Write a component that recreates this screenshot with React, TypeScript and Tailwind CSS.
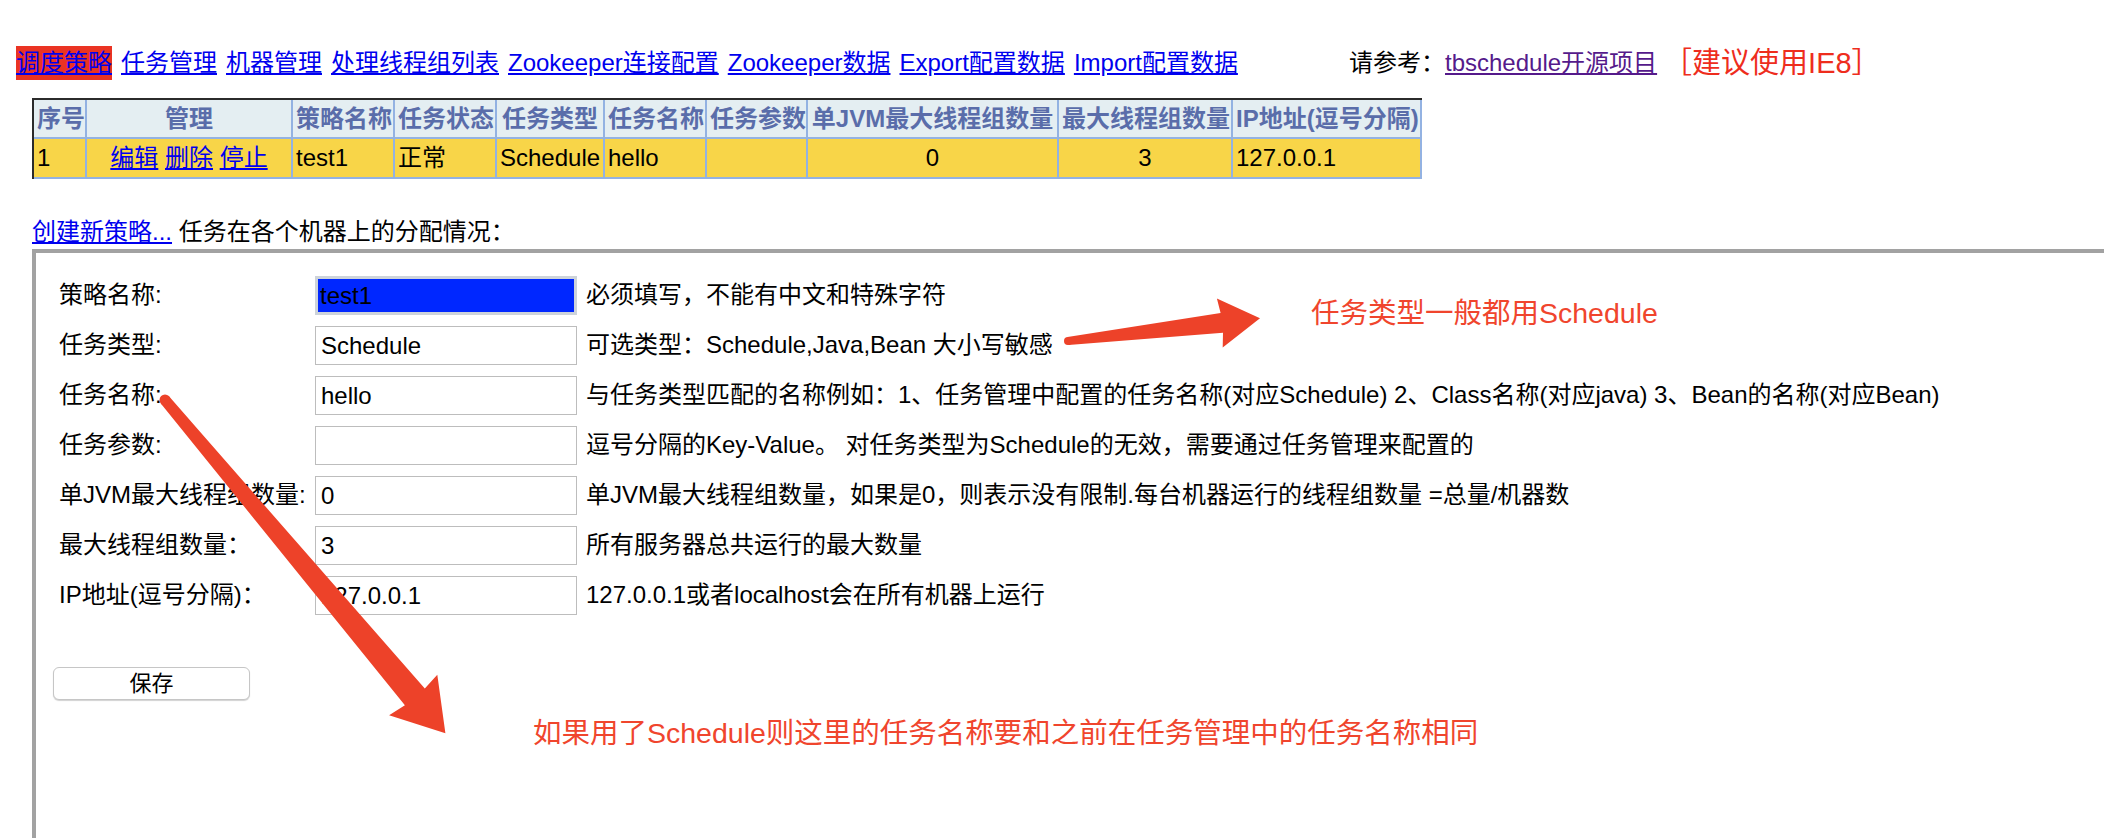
import React from 'react';

type Pt = [number, number];

// Preview-style arrow: thin rounded tail, shaft widens toward a triangular head
function arrowPoints(tail: Pt, tip: Pt, tailW: number, shaftW: number, headL: number, headH: number) {
  const dx = tip[0] - tail[0];
  const dy = tip[1] - tail[1];
  const len = Math.hypot(dx, dy);
  const ux = dx / len;
  const uy = dy / len;
  const nx = -uy;
  const ny = ux;
  const join: Pt = [tip[0] - ux * headL * 0.95, tip[1] - uy * headL * 0.95];
  const base: Pt = [tip[0] - ux * headL, tip[1] - uy * headL];
  const p = (x: number, y: number) => `${x.toFixed(1)},${y.toFixed(1)}`;
  return [
    p(tail[0] + nx * tailW / 2, tail[1] + ny * tailW / 2),
    p(join[0] + nx * shaftW / 2, join[1] + ny * shaftW / 2),
    p(base[0] + nx * headH, base[1] + ny * headH),
    p(tip[0], tip[1]),
    p(base[0] - nx * headH, base[1] - ny * headH),
    p(join[0] - nx * shaftW / 2, join[1] - ny * shaftW / 2),
    p(tail[0] - nx * tailW / 2, tail[1] - ny * tailW / 2),
  ].join(' ');
}

const NAV_LINKS = ['任务管理', '机器管理', '处理线程组列表', 'Zookeeper连接配置', 'Zookeeper数据', 'Export配置数据', 'Import配置数据'];

const HEADERS = [
  { label: '序号', w: 'w-[53px]' },
  { label: '管理', w: 'w-[206px]' },
  { label: '策略名称', w: 'w-[102px]' },
  { label: '任务状态', w: 'w-[102px]' },
  { label: '任务类型', w: 'w-[108px]' },
  { label: '任务名称', w: 'w-[102px]' },
  { label: '任务参数', w: 'w-[101px]' },
  { label: '单JVM最大线程组数量', w: 'w-[251px]' },
  { label: '最大线程组数量', w: 'w-[174px]' },
  { label: 'IP地址(逗号分隔)', w: 'w-[189px]' },
];

const FORM_ROWS = [
  { label: '策略名称:', value: 'test1', desc: '必须填写，不能有中文和特殊字符', focused: true },
  { label: '任务类型:', value: 'Schedule', desc: '可选类型：Schedule,Java,Bean 大小写敏感' },
  { label: '任务名称:', value: 'hello', desc: '与任务类型匹配的名称例如：1、任务管理中配置的任务名称(对应Schedule) 2、Class名称(对应java) 3、Bean的名称(对应Bean)' },
  { label: '任务参数:', value: '', desc: '逗号分隔的Key-Value。 对任务类型为Schedule的无效，需要通过任务管理来配置的' },
  { label: '单JVM最大线程组数量:', value: '0', desc: '单JVM最大线程组数量，如果是0，则表示没有限制.每台机器运行的线程组数量 =总量/机器数' },
  { label: '最大线程组数量：', value: '3', desc: '所有服务器总共运行的最大数量' },
  { label: 'IP地址(逗号分隔)：', value: '127.0.0.1', desc: '127.0.0.1或者localhost会在所有机器上运行' },
];

const cellBorder = 'border-r-2 border-b-2 border-[#93b2e2]';

function Nav() {
  return (
    <div className="flex items-center pt-[46px] pl-[16px] h-[80px] leading-[34px]">
      <div className="flex items-center gap-[9px] w-[1333px]">
        <a className="inline-block h-[34px] bg-[#ea3323] text-[#0000ee] underline">调度策略</a>
        {NAV_LINKS.map((l) => (
          <a key={l} className="text-[#0000ee] underline whitespace-nowrap">{l}</a>
        ))}
      </div>
      <div className="flex items-center whitespace-nowrap">
        <span>请参考：</span>
        <a className="text-[#551a8b] underline">tbschedule开源项目</a>
        <span className="ml-[6px] text-[29px] text-[#ee2d1d]">［建议使用IE8］</span>
      </div>
    </div>
  );
}

function StrategyTable() {
  return (
    <table className="mt-[18px] ml-[32px] w-[1390px] table-fixed border-separate border-spacing-0 border-t-2 border-l-2 border-[#2b2b2b]">
      <thead>
        <tr>
          {HEADERS.map((h) => (
            <th key={h.label} className={`${h.w} h-[39px] p-0 px-[3px] ${cellBorder} bg-[#e4eef2] text-[#5a6daa] font-bold text-center whitespace-nowrap`}>
              {h.label}
            </th>
          ))}
        </tr>
      </thead>
      <tbody>
        <tr className="bg-[#f8d548]">
          <td className={`h-[40px] px-[3px] ${cellBorder}`}>1</td>
          <td className={`px-[3px] ${cellBorder} text-center whitespace-nowrap`}>
            <a className="text-[#0000ee] underline">编辑</a>{' '}
            <a className="text-[#0000ee] underline">删除</a>{' '}
            <a className="text-[#0000ee] underline">停止</a>
          </td>
          <td className={`px-[3px] ${cellBorder}`}>test1</td>
          <td className={`px-[3px] ${cellBorder}`}>正常</td>
          <td className={`px-[3px] ${cellBorder}`}>Schedule</td>
          <td className={`px-[3px] ${cellBorder}`}>hello</td>
          <td className={`px-[3px] ${cellBorder}`}></td>
          <td className={`px-[3px] ${cellBorder} text-center`}>0</td>
          <td className={`px-[3px] ${cellBorder} text-center`}>3</td>
          <td className={`px-[3px] ${cellBorder} whitespace-nowrap`}>127.0.0.1</td>
        </tr>
      </tbody>
    </table>
  );
}

function StrategyForm() {
  return (
    <div className="ml-[32px] w-[2200px] h-[700px] border-t-4 border-l-4 border-[#a2a2a2] pt-[17px] pl-[23px]">
      {FORM_ROWS.map((r) => (
        <div key={r.label} className="flex items-center h-[50px]">
          <div className="w-[256px] whitespace-nowrap">{r.label}</div>
          {r.focused ? (
            <div className="w-[262px] h-[39px] border-[3px] border-[#cdd3da] bg-[#0027ff] pl-[2px] leading-[33px]">{r.value}</div>
          ) : (
            <div className="w-[262px] h-[39px] border border-[#bdbdbd] pl-[5px] leading-[37px]">{r.value}</div>
          )}
          <div className="ml-[9px] whitespace-nowrap">{r.desc}</div>
        </div>
      ))}
      <button className="mt-[47px] -ml-[6px] w-[197px] h-[33px] rounded-[6px] border border-[#c6c6c6] bg-white shadow-[0_1px_1px_rgba(0,0,0,0.18)] text-[22px] leading-[31px]">
        保存
      </button>
    </div>
  );
}

function Annotations() {
  const a1 = arrowPoints([1068, 341], [1260, 318.3], 8, 20, 40.5, 24.7);
  const a2 = arrowPoints([165, 400], [445.4, 733.3], 11, 26, 50, 31.5);
  return (
    <>
      <svg className="absolute inset-0 pointer-events-none" width="2104" height="838" viewBox="0 0 2104 838">
        <polygon points={a1} fill="#ed4229" />
        <circle cx="1068" cy="341" r="4" fill="#ed4229" />
        <polygon points={a2} fill="#ed4229" />
        <circle cx="165" cy="400" r="5.5" fill="#ed4229" />
      </svg>
      <div className="absolute left-[1311px] top-[293px] text-[28.5px] leading-[40px] text-[#f0452d] whitespace-nowrap">
        任务类型一般都用Schedule
      </div>
      <div className="absolute left-[533px] top-[713px] text-[28.5px] leading-[40px] text-[#f0452d] whitespace-nowrap">
        如果用了Schedule则这里的任务名称要和之前在任务管理中的任务名称相同
      </div>
    </>
  );
}

export default function App() {
  return (
    <div className="relative w-[2104px] h-[838px] overflow-hidden bg-white text-black text-[24px] font-['Liberation_Sans','Noto_Sans_CJK_SC',sans-serif]">
      <Nav />
      <StrategyTable />
      <div className="mt-[36px] ml-[32px] h-[34px] leading-[34px] whitespace-nowrap">
        <a className="text-[#0000ee] underline">创建新策略...</a> 任务在各个机器上的分配情况：
      </div>
      <StrategyForm />
      <Annotations />
    </div>
  );
}
